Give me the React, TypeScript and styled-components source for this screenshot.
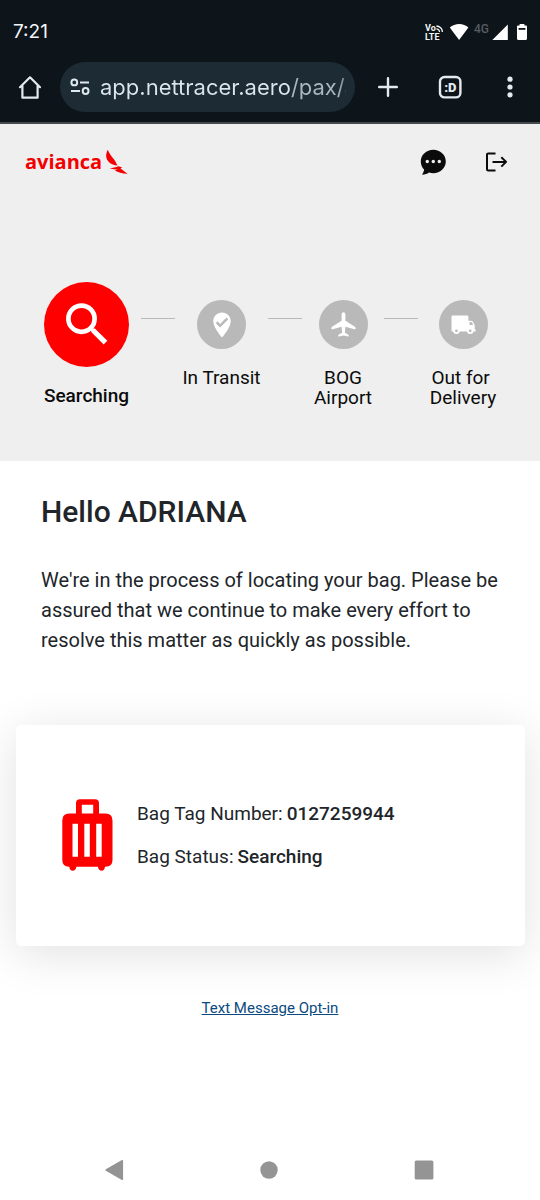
import React from "react";
import styled, { createGlobalStyle } from "styled-components";
import { MdWhereToVote } from "react-icons/md";

const GlobalStyle = createGlobalStyle`
  *, *::before, *::after { box-sizing: border-box; }
  body {
    margin: 0;
    background: #ffffff;
    color: #212529;
    font-family: Roboto, "Liberation Sans", sans-serif;
  }
  svg { display: block; }
`;

const Screen = styled.div`
  min-height: 100vh;
  display: flex;
  flex-direction: column;
`;

/* Browser chrome */
const BrowserChrome = styled.div`
  background: #0d141a;
  border-bottom: 2px solid #45494d;
`;

const StatusBar = styled.div`
  display: flex;
  align-items: center;
  justify-content: space-between;
  height: 62px;
  padding: 2px 12px 0 13px;
`;

const Clock = styled.time`
  color: #f3f6f8;
  font-family: Inter, Roboto, sans-serif;
  font-size: 19px;
  line-height: 24px;
`;

const StatusIcons = styled.div`
  display: flex;
  align-items: center;
  gap: 6px;
`;

const Toolbar = styled.div`
  display: flex;
  align-items: center;
  padding-bottom: 10px;
`;

const ToolButton = styled.button<{ $width?: number }>`
  width: ${({ $width = 60 }) => $width}px;
  height: 50px;
  flex: none;
  display: grid;
  place-items: center;
  padding: 0;
  border: 0;
  background: none;
  color: #e4eaee;
`;

const AddressBar = styled.label`
  flex: 1;
  min-width: 0;
  height: 50px;
  display: flex;
  align-items: center;
  gap: 10px;
  padding: 0 9px 0 10px;
  border-radius: 25px;
  background: #1d2b35;
  color: #dfe8ed;
`;

const AddressInput = styled.input`
  flex: 1;
  min-width: 0;
  height: 40px;
  padding: 0;
  border: 0;
  outline: 0;
  color: transparent;
  background: linear-gradient(90deg, #dbe5eb 0 192px, #a9b8c1 192px 238px, #5c6a74 248px);
  -webkit-background-clip: text;
  background-clip: text;
  font-family: Inter, Roboto, sans-serif;
  font-size: 22px;
`;

/* Page header */
const Hero = styled.header`
  background: #efefef;
  padding-bottom: 53px;
`;

const SiteBar = styled.div`
  display: flex;
  align-items: center;
  justify-content: space-between;
  height: 76px;
  padding: 0 32px 0 25px;
`;

const Brand = styled.a`
  display: flex;
  align-items: center;
  gap: 3px;
  color: #f40000;
  font-family: "Open Sans", sans-serif;
  font-size: 20px;
  font-weight: 700;
  line-height: 28px;
  text-decoration: none;
`;

const SiteActions = styled.div`
  display: flex;
  align-items: center;
  gap: 38px;
`;

const IconButton = styled.button`
  padding: 0;
  border: 0;
  background: none;
  color: #0b0b0b;
`;

/* Progress stepper */
const Stepper = styled.ol`
  list-style: none;
  display: grid;
  grid-template-columns: 109fr 34fr 93fr 34fr 82fr 34fr 90fr;
  margin: 0;
  padding: 82px 32px 0;
`;

const Step = styled.li<{ $active?: boolean }>`
  display: flex;
  flex-direction: column;
  align-items: center;
  gap: 19px;
  padding-top: ${({ $active }) => ($active ? 0 : 18)}px;
  color: #0b0b0b;
  font-size: 19px;
  font-weight: ${({ $active }) => ($active ? 500 : 400)};
  line-height: 20px;
  text-align: center;
`;

const StepBadge = styled.span<{ $active?: boolean }>`
  display: grid;
  place-items: center;
  width: ${({ $active }) => ($active ? 85 : 49)}px;
  height: ${({ $active }) => ($active ? 85 : 49)}px;
  border-radius: 50%;
  background: ${({ $active }) => ($active ? "#ff0000" : "#b9b9b9")};
  color: #ffffff;
`;

const StepLine = styled.li`
  height: 1px;
  margin-top: 36px;
  background: #b9b9b9;
`;

/* Main content */
const Main = styled.main`
  flex: 1;
  padding-bottom: 40px;
`;

const Intro = styled.section`
  padding: 33px 36px 70px 41px;
`;

const Greeting = styled.h1`
  margin: 0 0 35px;
  font-size: 30px;
  font-weight: 500;
  line-height: 36px;
`;

const Message = styled.p`
  margin: 0;
  font-size: 20px;
  line-height: 30px;
`;

const BagCard = styled.section`
  display: flex;
  align-items: center;
  gap: 24px;
  margin: 0 15px 0 16px;
  padding: 74px 46px;
  border-radius: 5px;
  background: #ffffff;
  box-shadow: 0 8px 48px rgba(0, 0, 0, 0.12);
`;

const BagDetails = styled.dl`
  display: flex;
  flex-direction: column;
  gap: 19px;
  margin: 0;
  font-size: 19px;
  line-height: 24px;
`;

const BagRow = styled.div`
  display: flex;
  gap: 4px;

  dt { font-weight: 400; }
  dd { margin: 0; font-weight: 500; }
`;

const OptIn = styled.p`
  margin: 51px 0 0;
  text-align: center;
  font-size: 15px;
  line-height: 22px;

  a { color: #0b4a80; }
`;

const SystemNav = styled.nav`
  display: flex;
  align-items: center;
  justify-content: space-between;
  height: 60px;
  padding: 0 86px 0 84px;
`;

const HomeIcon = () => (
  <svg width="24" height="24" viewBox="0 0 24 24" fill="none" stroke="currentColor" strokeWidth="2.2" strokeLinejoin="round" strokeLinecap="round">
    <path d="M2 12.2 12 2.3l10 9.9M4.4 11v11.7h15.2V11" />
  </svg>
);

const TuneIcon = () => (
  <svg width="20" height="18" viewBox="0 0 20 18" fill="none" stroke="currentColor" strokeWidth="2">
    <circle cx="4.3" cy="4.4" r="2.9" />
    <path d="M10 4.4h9M1 13h9" />
    <circle cx="15.6" cy="13" r="2.9" />
  </svg>
);

const PlusIcon = () => (
  <svg width="20" height="20" viewBox="0 0 20 20" fill="none" stroke="currentColor" strokeWidth="2.4" strokeLinecap="round">
    <path d="M10 1.2v17.6M1.2 10h17.6" />
  </svg>
);

const TabsIcon = () => (
  <svg width="24" height="24" viewBox="0 0 24 24">
    <rect x="2" y="2" width="20.4" height="20.4" rx="4.5" fill="none" stroke="currentColor" strokeWidth="2.4" />
    <text x="12.3" y="16.8" fill="currentColor" fontFamily="Roboto, sans-serif" fontSize="13" fontWeight="900" textAnchor="middle">:D</text>
  </svg>
);

const MoreIcon = () => (
  <svg width="6" height="22" viewBox="0 0 6 22" fill="currentColor">
    <circle cx="3" cy="3.2" r="2.6" />
    <circle cx="3" cy="11" r="2.6" />
    <circle cx="3" cy="18.8" r="2.6" />
  </svg>
);

const VolteIcon = () => (
  <svg width="18" height="17" viewBox="0 0 18 17" fill="#f3f6f8" fontFamily="Roboto, sans-serif" fontSize="9" fontWeight="700">
    <text x="0" y="7.2">Vo</text>
    <text x="0" y="15.8">LTE</text>
    <g fill="none" stroke="#f3f6f8" strokeWidth="1.3">
      <path d="M11.4 2a6 6 0 0 1 6 6M11.4 4.9A3.1 3.1 0 0 1 14.5 8" />
    </g>
  </svg>
);

const SignalIcons = () => (
  <svg width="79" height="18" viewBox="0 0 79 18" fill="#ffffff">
    <path d="M.8 4.6C5.8-.1 14.6-.1 19.4 4.6L10.1 17Z" />
    <text x="25" y="10" fill="#555c62" fontFamily="Roboto, sans-serif" fontSize="12" fontWeight="500">4G</text>
    <path d="M58.8 1.4V17H43.3Z" />
    <path d="M70.6 1h4.8v1.5h1.4c.7 0 1.2.5 1.2 1.2v12.1c0 .7-.5 1.2-1.2 1.2h-7.6c-.7 0-1.2-.5-1.2-1.2V3.7c0-.7.5-1.2 1.2-1.2h1.4Z" />
    <path d="M69.6 5h6.8v1.8h-6.8z" fill="#0d141a" />
  </svg>
);

const CondorMark = () => (
  <svg width="24" height="26" viewBox="0 0 24 26" fill="currentColor">
    <path d="M2.800.8C.2 5.300.7 10.300 4.300 13.400c2.200 1.800 4.700 2.700 8.200 3.100C11 13.300 10 11.400 7.400 8.400 5.400 6 4 4 2.800.8Z" />
    <path d="M4.500 19.200c3.300-.1 6.300-.9 9.200-2l3.600 1.200-2 1.200c1.600.7 3 2.500 7.400 5.200-5 .1-9.700-1.200-12.900-3.500l2.900-.8c-2.600-.1-5.500-.5-8.200-1.300Z" />
  </svg>
);

const ChatIcon = () => (
  <svg width="26" height="26" viewBox="0 0 26 26" fill="currentColor">
    <path d="M13.300.8C6.400.8.8 5.900.8 12.500c0 3.200 1.200 6 3.300 8.100-.2 1.800-.8 3.400-2 5.100 3 0 5.100-.8 6.900-2.200 1.400.5 2.800.7 4.300.7 6.900 0 12.500-5.100 12.500-11.700S20.200.8 13.300.8Z" />
    <g fill="#efefef">
      <circle cx="7.300" cy="12.500" r="1.700" />
      <circle cx="13.300" cy="12.500" r="1.700" />
      <circle cx="19.300" cy="12.500" r="1.700" />
    </g>
  </svg>
);

const LogoutIcon = () => (
  <svg width="24" height="22" viewBox="0 0 24 22" fill="none" stroke="currentColor" strokeWidth="2" strokeLinejoin="round">
    <path d="M11.500 2.400H4.200q-1.200 0-1.200 1.200v14.600q0 1.200 1.200 1.200h7.300" />
    <path d="M8.500 10.900h13M17.300 6.200l4.800 4.700-4.800 4.700" />
  </svg>
);

const SearchIcon = () => (
  <svg width="85" height="85" viewBox="0 0 85 85" fill="none" stroke="currentColor">
    <circle cx="37.500" cy="36.700" r="13.100" strokeWidth="4.700" />
    <path d="M46.700 46 50 49.300" strokeWidth="3.400" />
    <path d="m48.800 48 12.700 12.600" strokeWidth="5.200" />
  </svg>
);

const PlaneIcon = () => (
  <svg width="49" height="49" viewBox="0 0 49 49" fill="currentColor">
    <path d="M24.500 12.200c-1.200 0-1.900 1.100-1.900 2.400v6.200l-9.500 5.900c-.6.4-.8.900-.8 1.500 0 .9.500 1.300 1.300 1l9-2.500.5 6-3.200 1.900c-.8.500-.9 2 .1 1.900l4.500-1 4.500 1c1 .1.900-1.400.1-1.900l-3.200-1.900.5-6 9 2.500c.8.300 1.300-.1 1.300-1 0-.6-.2-1.100-.8-1.500l-9.500-5.900v-6.200c0-1.300-.7-2.400-1.900-2.400Z" />
  </svg>
);

const TruckIcon = () => (
  <svg width="49" height="49" viewBox="0 0 49 49" fill="currentColor">
    <path d="M13.700 15.500h14.500c.7 0 1.200.5 1.200 1.200v4h2.900c.5 0 .9.200 1.200.6l2.200 3.400v4.900c.8 0 1.100.4 1.100 1s-.4 1-1.100 1H13.700c-.7 0-1.200-.5-1.200-1.200V16.700c0-.7.5-1.200 1.200-1.200Z" />
    <path d="M30.600 22.100h1.800l2 3h-3.800Z" fill="#b9b9b9" />
    <g stroke="currentColor" strokeWidth="1.900" fill="#b9b9b9">
      <circle cx="17.400" cy="30.800" r="2.300" />
      <circle cx="31.200" cy="30.800" r="2.300" />
    </g>
  </svg>
);

const SuitcaseIcon = () => (
  <svg width="51" height="73" viewBox="0 0 51 73" fill="#ff0000">
    <path fillRule="evenodd" d="M18 .3h15q4 0 4 4v10.200h6.500q7 0 7 7V61q0 6.700-7 6.700h-.6c0 5.300-6.400 5.300-7 0H14.400c-.6 5.300-7 5.300-7 0H7Q.3 67.700.3 61V21.500q0-7 7-7H14V4.300q0-4 4-4Zm1.800 5.400v8.800h11.400V5.700ZM10.500 24.700v33H16v-33Zm11.800 0v33h5.500v-33Zm11.900 0v33h5.500v-33Z" />
  </svg>
);

export default function App() {
  return (
    <Screen>
      <GlobalStyle />
      <BrowserChrome>
        <StatusBar>
          <Clock>7:21</Clock>
          <StatusIcons>
            <VolteIcon />
            <SignalIcons />
          </StatusIcons>
        </StatusBar>
        <Toolbar>
          <ToolButton aria-label="Home"><HomeIcon /></ToolButton>
          <AddressBar>
            <TuneIcon />
            <AddressInput aria-label="Address" defaultValue="app.nettracer.aero/pax/a" />
          </AddressBar>
          <ToolButton $width={65} aria-label="New tab"><PlusIcon /></ToolButton>
          <ToolButton aria-label="Open tabs"><TabsIcon /></ToolButton>
          <ToolButton aria-label="More options"><MoreIcon /></ToolButton>
        </Toolbar>
      </BrowserChrome>

      <Hero>
        <SiteBar>
          <Brand href="#">avianca<CondorMark /></Brand>
          <SiteActions>
            <IconButton aria-label="Chat"><ChatIcon /></IconButton>
            <IconButton aria-label="Log out"><LogoutIcon /></IconButton>
          </SiteActions>
        </SiteBar>
        <Stepper>
          <Step $active aria-current="step">
            <StepBadge $active><SearchIcon /></StepBadge>
            Searching
          </Step>
          <StepLine aria-hidden="true" />
          <Step>
            <StepBadge><MdWhereToVote size={30} /></StepBadge>
            In Transit
          </Step>
          <StepLine aria-hidden="true" />
          <Step>
            <StepBadge><PlaneIcon /></StepBadge>
            <span>BOG<br />Airport</span>
          </Step>
          <StepLine aria-hidden="true" />
          <Step>
            <StepBadge><TruckIcon /></StepBadge>
            <span>Out for&nbsp;<br />Delivery</span>
          </Step>
        </Stepper>
      </Hero>

      <Main>
        <Intro>
          <Greeting>Hello ADRIANA</Greeting>
          <Message>
            We're in the process of locating your bag. Please be assured that we
            continue to make every effort to resolve this matter as quickly as possible.
          </Message>
        </Intro>
        <BagCard>
          <SuitcaseIcon />
          <BagDetails>
            <BagRow><dt>Bag Tag Number:</dt><dd>0127259944</dd></BagRow>
            <BagRow><dt>Bag Status:</dt><dd>Searching</dd></BagRow>
          </BagDetails>
        </BagCard>
        <OptIn><a href="#">Text Message Opt-in</a></OptIn>
      </Main>

      <SystemNav aria-label="System navigation">
        <ToolButton aria-label="Back">
          <svg width="20" height="22" viewBox="0 0 20 22" fill="#949494" stroke="#949494" strokeWidth="1.600" strokeLinejoin="round">
            <path d="M18.300 1.800v18.400L2.200 11Z" />
          </svg>
        </ToolButton>
        <ToolButton aria-label="Home screen">
          <svg width="18" height="18" viewBox="0 0 18 18" fill="#949494"><circle cx="9" cy="9" r="8.700" /></svg>
        </ToolButton>
        <ToolButton aria-label="Recent apps">
          <svg width="20" height="20" viewBox="0 0 20 20" fill="#949494"><rect x=".7" y=".5" width="18.700" height="19" rx="1.500" /></svg>
        </ToolButton>
      </SystemNav>
    </Screen>
  );
}
